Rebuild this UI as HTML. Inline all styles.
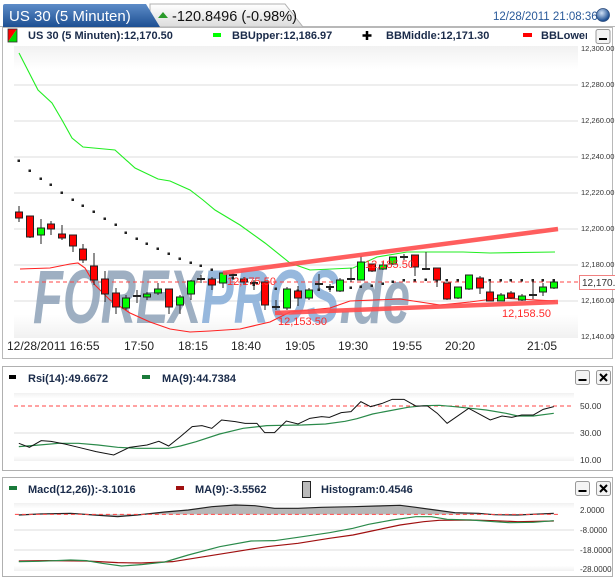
<!DOCTYPE html>
<html><head><meta charset="utf-8"><style>
html,body{margin:0;padding:0;background:#fff;width:615px;height:578px;overflow:hidden}
svg{display:block}
text{font-family:"Liberation Sans",sans-serif}
</style></head><body>
<svg width="615" height="578" viewBox="0 0 615 578" xmlns="http://www.w3.org/2000/svg">
<defs>
<linearGradient id="tabb" x1="0" y1="0" x2="0" y2="1"><stop offset="0" stop-color="#5d8cc8"/><stop offset="1" stop-color="#1d4f92"/></linearGradient>
<linearGradient id="tabg" x1="0" y1="0" x2="0" y2="1"><stop offset="0" stop-color="#ffffff"/><stop offset="1" stop-color="#dcdcdc"/></linearGradient>
<linearGradient id="bgv" x1="0" y1="0" x2="0" y2="1"><stop offset="0" stop-color="#f1f1f1"/><stop offset="0.08" stop-color="#fff"/><stop offset="0.92" stop-color="#fff"/><stop offset="1" stop-color="#f1f1f1"/></linearGradient>
<radialGradient id="globe" cx="0.4" cy="0.35" r="0.6"><stop offset="0" stop-color="#cfe0f5"/><stop offset="1" stop-color="#1d4f92"/></radialGradient>
</defs>

<!-- header -->
<line x1="0" y1="26.5" x2="615" y2="26.5" stroke="#b8b8b8"/>
<path d="M150,4 L285,4 L303,27 L150,27 Z" fill="url(#tabg)" stroke="#b0b0b0"/>
<path d="M3,27 L3,6 Q3,4 5,4 L146,4 L160,27 Z" fill="url(#tabb)"/>
<text x="9" y="21" font-size="15" fill="#fff">US 30 (5 Minuten)</text>
<path d="M158,18 L163,12 L168,18 Z" fill="#2a9a2a"/>
<text x="172" y="21" font-size="14.5" fill="#111">-120.8496 (-0.98%)</text>
<text x="493" y="20" font-size="11.5" fill="#2a5a9a">12/28/2011 21:08:36</text>
<circle cx="603" cy="15" r="6.5" fill="url(#globe)" stroke="#2a4a7a" stroke-width="0.8"/>

<!-- main panel -->
<rect x="2.5" y="27.5" width="610" height="331" fill="#fff" stroke="#b8b8b8"/>
<path d="M8,29 L17,29 L8,42 Z" fill="#ff0000"/><path d="M17,29 L17,42 L8,42 Z" fill="#00dd00"/><rect x="8" y="29" width="9" height="13" fill="none" stroke="#333" stroke-width="0.8"/>
<text x="28" y="39" font-size="11" font-weight="bold" fill="#1a2b4a">US 30 (5 Minuten):12,170.50</text>
<rect x="213" y="33" width="8" height="4" fill="#00ff00"/>
<text x="232" y="39" font-size="11" font-weight="bold" fill="#1a2b4a">BBUpper:12,186.97</text>
<path d="M367,31 v9 M362.5,35.5 h9" stroke="#000" stroke-width="2.5"/>
<text x="386" y="39" font-size="11" font-weight="bold" fill="#1a2b4a">BBMiddle:12,171.30</text>
<rect x="523" y="33" width="9" height="4" fill="#ff0000"/>
<svg x="0" y="0" width="587" height="50"><text x="541" y="39" font-size="11" font-weight="bold" fill="#1a2b4a">BBLower:12,155.63</text></svg>
<rect x="596" y="29.5" width="14" height="14" rx="2" fill="#f4f4f4" stroke="#999"/><rect x="599" y="38" width="8" height="2" fill="#000"/>

<rect x="14" y="46" width="564" height="292" fill="url(#bgv)"/>
<g stroke="#dcdcdc" stroke-width="1">
<line x1="14" y1="85" x2="578" y2="85"/><line x1="14" y1="121" x2="578" y2="121"/><line x1="14" y1="157" x2="578" y2="157"/><line x1="14" y1="193" x2="578" y2="193"/><line x1="14" y1="229" x2="578" y2="229"/><line x1="14" y1="265" x2="578" y2="265"/><line x1="14" y1="301" x2="578" y2="301"/>
</g>
<g font-size="7.5" fill="#333">
<text x="581" y="51">12,300.00</text><text x="581" y="87">12,280.00</text><text x="581" y="123">12,260.00</text><text x="581" y="159">12,240.00</text><text x="581" y="195">12,220.00</text><text x="581" y="231">12,200.00</text><text x="581" y="267">12,180.00</text><text x="581" y="303">12,160.00</text><text x="581" y="339">12,140.00</text>
</g>

<!-- watermark -->
<text x="33" y="323" font-size="76" font-weight="bold" font-style="italic" fill="#8ea2b8" opacity="0.85" textLength="377" lengthAdjust="spacingAndGlyphs">FOREX<tspan fill="#86acd8">PROS</tspan><tspan fill="#8ea2b8">.de</tspan></text>

<!-- dashed line -->
<line x1="14" y1="282" x2="578" y2="282" stroke="#ff4444" stroke-dasharray="4,3"/>
<rect x="579.5" y="275.5" width="40" height="14" fill="#fff" stroke="#f08080"/>
<text x="582" y="286" font-size="10" fill="#333">12,170.5</text>

<!-- BB lines -->
<polyline fill="none" stroke="#22ee22" stroke-width="1.1" points="19,53 38,90 52,103 62,120 72,138 83,147 115,150 135,168 158,179 170,181 190,190 203,200 215,210 240,225 265,243 290,263 310,270 353,268 377,257 407,252 463,252 490,253 555,252"/>
<polyline fill="none" stroke="#ff2222" stroke-width="1.1" points="20,269 50,268 70,264 78,263 85,268 95,285 110,300 130,313 150,322 170,329 190,332 210,331 240,329 270,322 290,312 330,308 350,301 400,299 440,305 470,302 500,298 555,301"/>
<g fill="#222">
<rect x="17.5" y="159.5" width="2.5" height="2.5"/><rect x="28.5" y="169.5" width="2.5" height="2.5"/><rect x="39.5" y="177.5" width="2.5" height="2.5"/><rect x="49.5" y="183.5" width="2.5" height="2.5"/><rect x="60.5" y="191.5" width="2.5" height="2.5"/><rect x="71.5" y="198.5" width="2.5" height="2.5"/><rect x="81.5" y="204.5" width="2.5" height="2.5"/><rect x="92.5" y="210.5" width="2.5" height="2.5"/><rect x="103.5" y="217.5" width="2.5" height="2.5"/><rect x="114.5" y="223.5" width="2.5" height="2.5"/><rect x="124.5" y="231.5" width="2.5" height="2.5"/><rect x="135.5" y="237.5" width="2.5" height="2.5"/><rect x="145.5" y="242.5" width="2.5" height="2.5"/><rect x="156.5" y="247.5" width="2.5" height="2.5"/><rect x="167.5" y="252.5" width="2.5" height="2.5"/><rect x="178.5" y="257.5" width="2.5" height="2.5"/><rect x="189.5" y="261.5" width="2.5" height="2.5"/><rect x="199.5" y="264.5" width="2.5" height="2.5"/><rect x="210.5" y="268.5" width="2.5" height="2.5"/><rect x="221.5" y="272.5" width="2.5" height="2.5"/><rect x="231.5" y="276.5" width="2.5" height="2.5"/><rect x="242.5" y="279.5" width="2.5" height="2.5"/><rect x="252.5" y="283.5" width="2.5" height="2.5"/><rect x="263.5" y="285.5" width="2.5" height="2.5"/><rect x="274.5" y="287.5" width="2.5" height="2.5"/><rect x="285.5" y="288.5" width="2.5" height="2.5"/><rect x="296.5" y="289.5" width="2.5" height="2.5"/><rect x="307.5" y="289.5" width="2.5" height="2.5"/><rect x="317.5" y="288.5" width="2.5" height="2.5"/><rect x="328.5" y="287.5" width="2.5" height="2.5"/><rect x="338.5" y="287" width="2.5" height="2.5"/><rect x="349.5" y="286.5" width="2.5" height="2.5"/><rect x="359.5" y="285.5" width="2.5" height="2.5"/><rect x="370.5" y="284.5" width="2.5" height="2.5"/><rect x="381.5" y="282.5" width="2.5" height="2.5"/><rect x="391.5" y="280.5" width="2.5" height="2.5"/><rect x="402.5" y="279" width="2.5" height="2.5"/><rect x="413.5" y="279" width="2.5" height="2.5"/><rect x="424.5" y="278.5" width="2.5" height="2.5"/><rect x="435.5" y="279" width="2.5" height="2.5"/><rect x="445.5" y="279" width="2.5" height="2.5"/><rect x="456.5" y="279" width="2.5" height="2.5"/><rect x="467.5" y="279" width="2.5" height="2.5"/><rect x="478.5" y="279" width="2.5" height="2.5"/><rect x="488.5" y="279" width="2.5" height="2.5"/><rect x="499.5" y="279" width="2.5" height="2.5"/><rect x="509.5" y="279" width="2.5" height="2.5"/><rect x="520.5" y="279" width="2.5" height="2.5"/><rect x="531.5" y="279" width="2.5" height="2.5"/><rect x="541.5" y="279" width="2.5" height="2.5"/><rect x="552.5" y="279" width="2.5" height="2.5"/>
</g>

<!-- candles -->
<g stroke="#222" stroke-width="1">
<line x1="19" y1="206" x2="19" y2="222"/><rect x="15.5" y="212" width="7" height="6" fill="#f00"/>
<line x1="30" y1="216" x2="30" y2="238"/><rect x="26.5" y="216" width="7" height="21" fill="#f00"/>
<line x1="41" y1="219" x2="41" y2="244"/><rect x="37.5" y="228" width="7" height="7" fill="#0f0"/>
<line x1="51" y1="221" x2="51" y2="235"/><rect x="47.5" y="224" width="7" height="5" fill="#f00"/>
<line x1="62" y1="225" x2="62" y2="240"/><rect x="58.5" y="234" width="7" height="4" fill="#f00"/>
<line x1="73" y1="235" x2="73" y2="252"/><rect x="69.5" y="235" width="7" height="11" fill="#f00"/>
<line x1="83" y1="244" x2="83" y2="263"/><rect x="79.5" y="249" width="7" height="11" fill="#f00"/>
<line x1="94" y1="253" x2="94" y2="285"/><rect x="90.5" y="266" width="7" height="14" fill="#f00"/>
<line x1="105" y1="271" x2="105" y2="302"/><rect x="101.5" y="279" width="7" height="15" fill="#f00"/>
<line x1="116" y1="288" x2="116" y2="314"/><rect x="112.5" y="293" width="7" height="14" fill="#f00"/>
<line x1="126" y1="295" x2="126" y2="310"/><rect x="122.5" y="298" width="7" height="10" fill="#0f0"/>
<line x1="137" y1="290" x2="137" y2="303"/><line x1="133" y1="296" x2="141" y2="296" stroke-width="2"/>
<line x1="147" y1="292" x2="147" y2="300"/><rect x="143.5" y="294" width="7" height="3" fill="#0f0"/>
<line x1="158" y1="283" x2="158" y2="295"/><rect x="154.5" y="289" width="7" height="4" fill="#0f0"/>
<line x1="169" y1="289" x2="169" y2="314"/><rect x="165.5" y="289" width="7" height="18" fill="#f00"/>
<line x1="180" y1="295" x2="180" y2="314"/><rect x="176.5" y="297" width="7" height="8" fill="#0f0"/>
<line x1="191" y1="280" x2="191" y2="300"/><rect x="187.5" y="281" width="7" height="13" fill="#0f0"/>
<line x1="201" y1="275" x2="201" y2="283"/><line x1="197" y1="279" x2="205" y2="279" stroke-width="2"/>
<line x1="212" y1="277" x2="212" y2="290"/><rect x="208.5" y="279" width="7" height="6" fill="#f00"/>
<line x1="223" y1="273" x2="223" y2="288"/><rect x="219.5" y="273" width="7" height="10" fill="#0f0"/>
<line x1="233" y1="273" x2="233" y2="280"/><line x1="229" y1="275" x2="237" y2="275" stroke-width="2"/>
<line x1="244" y1="277" x2="244" y2="285"/><rect x="240.5" y="279" width="7" height="3" fill="#f00"/>
<line x1="254" y1="280" x2="254" y2="290"/><line x1="250" y1="283" x2="258" y2="283" stroke-width="2"/>
<line x1="265" y1="280" x2="265" y2="310"/><rect x="261.5" y="282" width="7" height="23" fill="#f00"/>
<line x1="276" y1="300" x2="276" y2="310"/><line x1="272" y1="307" x2="280" y2="307" stroke-width="2"/>
<line x1="287" y1="287" x2="287" y2="310"/><rect x="283.5" y="289" width="7" height="19" fill="#0f0"/>
<line x1="298" y1="286" x2="298" y2="306"/><rect x="294.5" y="291" width="7" height="7" fill="#f00"/>
<line x1="309" y1="288" x2="309" y2="300"/><rect x="305.5" y="290" width="7" height="8" fill="#0f0"/>
<line x1="319" y1="274" x2="319" y2="290"/><line x1="315" y1="284" x2="323" y2="284" stroke-width="2"/>
<line x1="330" y1="284" x2="330" y2="292"/><line x1="326" y1="287" x2="334" y2="287" stroke-width="2"/>
<line x1="340" y1="278" x2="340" y2="292"/><rect x="336.5" y="280" width="7" height="11" fill="#0f0"/>
<line x1="351" y1="268" x2="351" y2="282"/><line x1="347" y1="279" x2="355" y2="279" stroke-width="2"/>
<line x1="361" y1="256" x2="361" y2="280"/><rect x="357.5" y="262" width="7" height="18" fill="#0f0"/>
<line x1="372" y1="264" x2="372" y2="272"/><rect x="368.5" y="264" width="7" height="7" fill="#f00"/>
<line x1="383" y1="262" x2="383" y2="270"/><rect x="379.5" y="265" width="7" height="4" fill="#0f0"/>
<line x1="393" y1="257" x2="393" y2="265"/><rect x="389.5" y="257" width="7" height="7" fill="#0f0"/>
<line x1="404" y1="254" x2="404" y2="260"/><line x1="400" y1="257" x2="408" y2="257" stroke-width="2"/>
<line x1="415" y1="255" x2="415" y2="276"/><rect x="411.5" y="255" width="7" height="12" fill="#f00"/>
<line x1="426" y1="252" x2="426" y2="270"/><line x1="422" y1="269" x2="430" y2="269" stroke-width="2"/>
<line x1="437" y1="268" x2="437" y2="287"/><rect x="433.5" y="268" width="7" height="12" fill="#f00"/>
<line x1="447" y1="283" x2="447" y2="300"/><rect x="443.5" y="283" width="7" height="16" fill="#f00"/>
<line x1="458" y1="287" x2="458" y2="299"/><rect x="454.5" y="287" width="7" height="11" fill="#0f0"/>
<line x1="469" y1="275" x2="469" y2="290"/><rect x="465.5" y="275" width="7" height="14" fill="#0f0"/>
<line x1="480" y1="276" x2="480" y2="294"/><rect x="476.5" y="278" width="7" height="10" fill="#f00"/>
<line x1="490" y1="282" x2="490" y2="301"/><rect x="486.5" y="292" width="7" height="9" fill="#f00"/>
<line x1="501" y1="293" x2="501" y2="301"/><rect x="497.5" y="295" width="7" height="6" fill="#0f0"/>
<line x1="511" y1="291" x2="511" y2="299"/><rect x="507.5" y="293" width="7" height="5" fill="#f00"/>
<line x1="522" y1="294" x2="522" y2="301"/><rect x="518.5" y="296" width="7" height="4" fill="#0f0"/>
<line x1="533" y1="279" x2="533" y2="299"/><line x1="529" y1="295" x2="537" y2="295" stroke-width="2"/>
<line x1="543" y1="283" x2="543" y2="296"/><rect x="539.5" y="287" width="7" height="5" fill="#0f0"/>
<line x1="554" y1="279" x2="554" y2="289"/><rect x="550.5" y="282" width="7" height="6" fill="#0f0"/>
</g>

<!-- trend lines -->
<line x1="223" y1="273" x2="558" y2="229" stroke="#ff4d4d" stroke-width="4.5" opacity="0.9"/>
<line x1="275" y1="313" x2="558" y2="302" stroke="#ff4d4d" stroke-width="4.5" opacity="0.9"/>
<g font-size="11" fill="#ff2a2a" font-family="Liberation Mono,monospace">
<text x="227" y="285">12,175.50</text><text x="278" y="325">12,153.50</text><text x="365" y="268">12,185.50</text><text x="502" y="317">12,158.50</text>
</g>

<!-- time axis -->
<g font-size="12" fill="#222">
<text x="7" y="350">12/28/2011 16:55</text><text x="124" y="350">17:50</text><text x="178" y="350">18:15</text><text x="231" y="350">18:40</text><text x="285" y="350">19:05</text><text x="338" y="350">19:30</text><text x="392" y="350">19:55</text><text x="445" y="350">20:20</text><text x="527" y="350">21:05</text>
</g>

<!-- RSI panel -->
<rect x="2.5" y="366.5" width="610" height="104" fill="#fff" stroke="#b0b0b0"/>
<rect x="9" y="375" width="7" height="4" fill="#000"/>
<text x="28" y="382" font-size="11" font-weight="bold" fill="#1a2b4a">Rsi(14):49.6672</text>
<rect x="142" y="375" width="8" height="4" fill="#1a7a3a"/>
<text x="162" y="382" font-size="11" font-weight="bold" fill="#1a2b4a">MA(9):44.7384</text>
<rect x="575.5" y="370.5" width="14" height="14" rx="2" fill="#f4f4f4" stroke="#999"/><rect x="578.5" y="379" width="8" height="2" fill="#000"/>
<rect x="596.5" y="370.5" width="14" height="14" rx="2" fill="#f4f4f4" stroke="#999"/><path d="M600,374 L607,381 M607,374 L600,381" stroke="#000" stroke-width="2"/>
<rect x="14" y="393" width="560" height="68" fill="url(#bgv)"/>
<line x1="14" y1="433" x2="574" y2="433" stroke="#dcdcdc"/>
<line x1="14" y1="406" x2="574" y2="406" stroke="#ff4444" stroke-dasharray="4,3"/>
<g font-size="8.5" fill="#333"><text x="580" y="409">50.00</text><text x="580" y="436">30.00</text><text x="580" y="463">10.00</text></g>
<g transform="translate(0,360) scale(0.3922,0.3333)">
<polyline fill="none" stroke="#2a8a4a" stroke-width="1.2" vector-effect="non-scaling-stroke" points="48,260 100,255 150,250 200,250 250,255 300,262 350,265 430,265 460,258 500,245 560,222 620,205 680,197 720,196 770,195 830,192 880,184 910,176 950,162 990,153 1040,142 1080,137 1120,136 1160,140 1200,145 1240,150 1290,160 1320,168 1360,168 1412,160"/>
<polyline fill="none" stroke="#111" stroke-width="1" vector-effect="non-scaling-stroke" points="48,250 75,262 105,242 130,244 165,252 200,262 245,275 290,285 330,262 375,255 405,244 430,258 460,230 490,200 515,197 540,205 565,180 600,185 625,190 655,190 675,218 700,218 730,183 760,192 790,175 820,170 840,172 870,158 895,155 920,125 945,140 975,130 1000,118 1030,118 1060,138 1090,138 1115,160 1140,190 1195,145 1250,180 1280,168 1305,172 1330,165 1360,165 1385,148 1412,140"/>
</g>

<!-- MACD panel -->
<rect x="2.5" y="477.5" width="610" height="99" fill="#fff" stroke="#b0b0b0"/>
<rect x="9" y="486" width="8" height="4" fill="#1a7a3a"/>
<text x="28" y="493" font-size="11" font-weight="bold" fill="#1a2b4a">Macd(12,26)):-3.1016</text>
<rect x="176" y="486" width="8" height="4" fill="#a01010"/>
<text x="195" y="493" font-size="11" font-weight="bold" fill="#1a2b4a">MA(9):-3.5562</text>
<rect x="302.5" y="481.5" width="8" height="16" fill="#bbb" stroke="#222"/>
<text x="321" y="493" font-size="11" font-weight="bold" fill="#1a2b4a">Histogram:0.4546</text>
<rect x="575.5" y="481.5" width="14" height="14" rx="2" fill="#f4f4f4" stroke="#999"/><rect x="578.5" y="490" width="8" height="2" fill="#000"/>
<rect x="596.5" y="481.5" width="14" height="14" rx="2" fill="#f4f4f4" stroke="#999"/><path d="M600,485 L607,492 M607,485 L600,492" stroke="#000" stroke-width="2"/>
<rect x="14" y="503" width="560" height="68" fill="url(#bgv)"/>
<line x1="14" y1="530" x2="574" y2="530" stroke="#dcdcdc"/>
<line x1="14" y1="550" x2="574" y2="550" stroke="#dcdcdc"/>
<g font-size="8" fill="#333"><text x="580" y="513">2.0000</text><text x="580" y="533">-8.0000</text><text x="580" y="553">-18.0000</text><text x="580" y="572">-28.0000</text></g>
<g transform="translate(0,490) scale(0.3922,0.3333)">
<path d="M48,75 L100,72 L180,70 L240,75 L300,80 L350,75 L420,66 L480,60 L540,50 L600,45 L650,47 L700,55 L760,55 L820,52 L900,50 L960,48 L1020,46 L1060,52 L1110,60 L1160,68 L1220,70 L1260,74 L1320,75 L1412,70 L1412,73 L48,73 Z" fill="#aaa" opacity="0.85"/>
<polyline fill="none" stroke="#222" stroke-width="1.2" vector-effect="non-scaling-stroke" points="48,75 100,72 180,70 240,75 300,80 350,75 420,66 480,60 540,50 600,45 650,47 700,55 760,55 820,52 900,50 960,48 1020,46 1060,52 1110,60 1160,68 1220,70 1260,74 1320,75 1412,70"/>
<line x1="38" y1="73" x2="1430" y2="73" stroke="#ff4444" stroke-dasharray="4,3" vector-effect="non-scaling-stroke"/>
<polyline fill="none" stroke="#a01010" stroke-width="1.2" vector-effect="non-scaling-stroke" points="48,213 120,212 220,213 300,218 360,219 440,215 520,200 600,185 680,170 760,160 840,145 900,135 960,120 1020,105 1080,95 1120,91 1200,90 1260,92 1320,95 1412,93"/>
<polyline fill="none" stroke="#2a8a4a" stroke-width="1.2" vector-effect="non-scaling-stroke" points="48,215 100,214 180,210 220,212 260,220 310,228 360,224 420,216 480,195 560,170 640,153 700,152 760,142 840,128 900,115 940,103 1000,90 1060,80 1100,80 1140,88 1200,90 1260,95 1300,98 1360,97 1412,92"/>
</g>
</svg>
</body></html>
